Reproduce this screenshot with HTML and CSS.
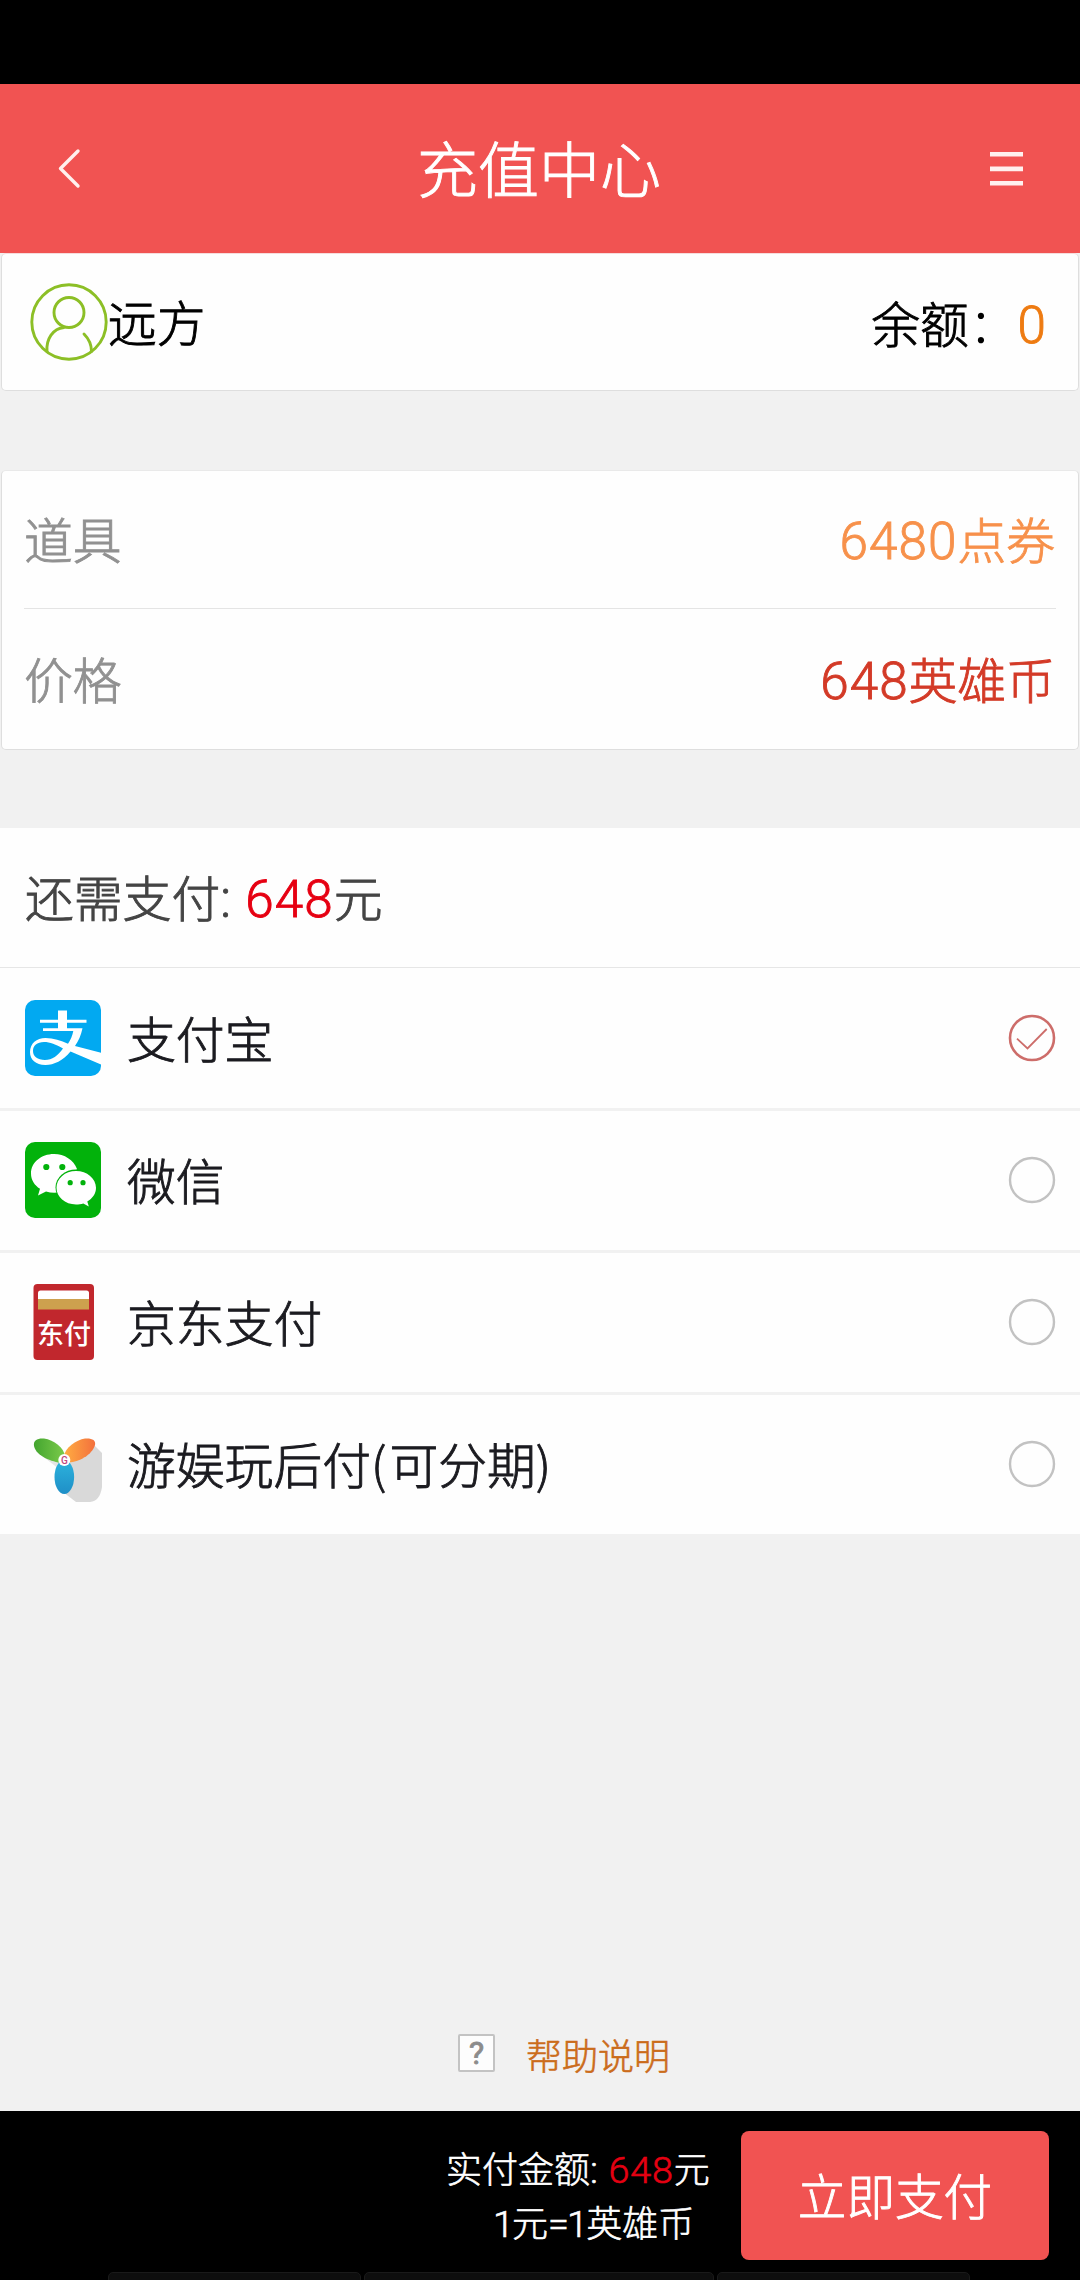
FILE: index.html
```html
<!DOCTYPE html>
<html lang="zh-CN">
<head>
<meta charset="utf-8">
<title>充值中心</title>
<link rel="stylesheet" href="styles.css">
</head>
<body>
<div class="status-bar"></div>
<header class="header">
  <svg class="back" viewBox="0 0 24 42" fill="none" stroke="#fff0ee" stroke-width="3.4" stroke-linecap="round" stroke-linejoin="round"><path d="M20 3 2.500 20.500 20 38"/></svg>
  <h1 class="title">充值中心</h1>
  <svg class="menu" viewBox="0 0 33 34" fill="#fff0ee"><path d="M0 0h33v4.6H0zM0 14.6h33v4.6H0zM0 29h33v4.6H0z"/></svg>
</header>

<section class="card account">
  <svg class="avatar" viewBox="0 0 78 78" fill="none" stroke="#8cbf26" stroke-width="2.9">
    <circle cx="39" cy="39" r="37.2"/>
    <circle cx="39" cy="29.5" r="15"/>
    <path d="M17 68.500C16 56 23 45.500 34 44.500M54 51C59 56 61.500 61.500 61.500 68.500" stroke-linecap="round"/>
  </svg>
  <span class="name">远方</span>
  <span class="balance">余额<i class="wide-colon">：</i><b class="num zero">0</b></span>
</section>

<section class="card order">
  <div class="order-row"><span>道具</span><span class="item"><b class="num">6480</b>点券</span></div>
  <div class="order-row"><span>价格</span><span class="price"><b class="num">648</b>英雄币</span></div>
</section>

<section class="methods">
  <div class="due"><span>还需支付<i class="num colon">:</i><b class="num red">648</b>元</span></div>

  <div class="method">
    <svg class="logo" viewBox="0 0 76 76">
      <rect width="76" height="76" rx="10" fill="#02a9f1"/>
      <path fill="#fff" d="M33 10.500h9v9.300h19.500v3H42v5.500h15.500C56 35.500 53.500 41 50 46L76 52.800V64.500L45.500 51.500C38 60.500 29 65 20.500 65 10.500 65 5 59.500 5 52 5 43.500 11.500 38 20.500 38c8 0 15.500 2.500 22.500 5.700C45.700 40 47.300 36 48.300 31H18v-2.700h15v-5.500H15v-3h18zM38 48.500C31 44.500 25 42 19 42 12 42 8 45.500 8 51s4.500 9 12 9c7 0 13-4.500 18-11.500z"/>
    </svg>
    <span class="label">支付宝</span>
    <svg class="radio" viewBox="0 0 48 48" fill="none" stroke="#cd6d6a"><circle cx="24" cy="24" r="22" stroke-width="2.600"/><path d="M9 24.700 19.500 34.500 38.700 15" stroke-width="1.800"/></svg>
  </div>

  <div class="method">
    <svg class="logo" viewBox="0 0 76 76">
      <rect width="76" height="76" rx="10" fill="#02b20b"/>
      <path fill="#fff" d="M29 12C16 12 6 20.500 6 31.500c0 6.500 3.500 11.800 9 15.300L13 53.500l8-4c5 1.500 10 1.500 15 .5L52 27C48.500 18 39.500 12 29 12z"/>
      <ellipse cx="51" cy="45.500" rx="20.500" ry="18" fill="#02b20b"/>
      <path fill="#fff" d="M51 29C40 29 31.500 36.500 31.500 45.800S40 62.500 51 62.500c2.700 0 5-.3 7.300-1l5.500 3-1.500-5C67.500 56.500 71 51.700 71 45.800 71 36.500 62 29 51 29z"/>
      <g fill="#02b20b"><circle cx="21.300" cy="25" r="3.100"/><circle cx="37.300" cy="25" r="3.100"/><circle cx="45.200" cy="40.700" r="2.600"/><circle cx="58" cy="40.700" r="2.600"/></g>
    </svg>
    <span class="label">微信</span>
    <svg class="radio" viewBox="0 0 48 48" fill="none" stroke="#c2c2c2"><circle cx="24" cy="24" r="22" stroke-width="2.4"/></svg>
  </div>

  <div class="method">
    <svg class="logo" viewBox="0 0 76 76">
      <rect x="8.500" width="60.500" height="76" rx="4" fill="#c1272d"/>
      <path d="M13 9q0-2.500 2.500-2.500h46q2.500 0 2.500 2.500v6H13z" fill="#fff"/>
      <path d="M13 15h51v10.500H13z" fill="#cda14e"/>
      <text class="jd" x="39" y="60" text-anchor="middle" fill="#fff">东付</text>
    </svg>
    <span class="label">京东支付</span>
    <svg class="radio" viewBox="0 0 48 48" fill="none" stroke="#c2c2c2"><circle cx="24" cy="24" r="22" stroke-width="2.4"/></svg>
  </div>

  <div class="method">
    <svg class="logo" viewBox="0 0 76 76">
      <defs>
        <linearGradient id="leaf" x1="0" y1="0" x2="1" y2="0"><stop offset="0" stop-color="#43a52f"/><stop offset="1" stop-color="#7ccb4b"/></linearGradient>
        <linearGradient id="flame" x1="0" y1="0" x2="1" y2="0"><stop offset="0" stop-color="#ffad42"/><stop offset="1" stop-color="#f3703d"/></linearGradient>
        <linearGradient id="drop" x1="0" y1="0" x2="0" y2="1"><stop offset="0" stop-color="#2cb3dd"/><stop offset="1" stop-color="#1f8fc7"/></linearGradient>
      </defs>
      <path fill="#e5e5e5" d="M11 25 34 43V34z"/>
      <path fill="#d9d9d9" d="M68 18 77 27V61Q75 75 65 76H51L38 66 40 32z"/>
      <path fill="url(#leaf)" d="M37 37C27 36 11 30 9 20 8 14 13 12 19 12.500 29 14 39 22 40 30z"/>
      <path fill="url(#flame)" d="M41 36C50 38 67 30 70 19 71 14 67 12 60 12.500 51 14 40 22 39 30z"/>
      <ellipse cx="39.300" cy="51" rx="9.800" ry="17" fill="url(#drop)"/>
      <circle cx="39.300" cy="34" r="6" fill="#fff"/>
      <text class="g" x="39.300" y="37.600" text-anchor="middle" fill="#c2477d">G</text>
    </svg>
    <span class="label">游娱玩后付<i class="paren">(</i>可分期<i class="paren">)</i></span>
    <svg class="radio" viewBox="0 0 48 48" fill="none" stroke="#c2c2c2"><circle cx="24" cy="24" r="22" stroke-width="2.4"/></svg>
  </div>
</section>

<div class="help">
  <span class="help-icon">?</span>
  <span class="help-text">帮助说明</span>
</div>

<footer class="footer">
  <div class="pay-bar">
    <div class="summary">
      <p>实付金额<i class="num colon">:</i><b class="num red">648</b>元</p>
      <p class="rate"><b class="num">1</b>元<b class="num">=1</b>英雄币</p>
    </div>
    <button class="pay">立即支付</button>
  </div>
  <div class="tabs"><span class="tab t1"></span><span class="tab t2"></span><span class="tab t3"></span></div>
</footer>
</body>
</html>
```
FILE: styles.css
```css
* { box-sizing: border-box; }
body {
  margin: 0;
  width: 1080px;
  height: 2280px;
  display: flex;
  flex-direction: column;
  overflow: hidden;
  background: #f1f1f1;
  font-family: "Noto Sans CJK SC", sans-serif;
  font-weight: 300;
  font-size: 48.8px;
  line-height: 1;
  white-space: nowrap;
  -webkit-text-stroke: .9px currentColor;
}
b, i { font-weight: inherit; font-style: normal; }
p { margin: 0; }
.num { font-family: Roboto, sans-serif; font-weight: 300; font-size: 1.05em; line-height: 0; letter-spacing: .02em; }
.colon { margin-right: .26em; }
.red { color: #e60012; }

.status-bar { height: 84px; background: #000; }
.header {
  height: 169px;
  padding: 0 57px 0 58px;
  display: flex;
  align-items: center;
  justify-content: space-between;
  background: #f15352;
}
.back { width: 24px; height: 42px; }
.menu { width: 33px; height: 34px; }
.title { margin: 0; padding: 0 0 5px 6px; color: #fff; font-size: 61px; font-weight: 300; }

.card {
  margin: 0 1px;
  background: #fefefe;
  border: 1px solid #dedede;
  border-radius: 5px;
}
.account {
  height: 138px;
  border-top-color: #f6dcdc;
  padding: 0 31px 0 28px;
  display: flex;
  align-items: center;
  color: #000;
}
.avatar { width: 78px; height: 78px; }
.name { padding-bottom: 1px; }
.balance { margin-left: auto; }
.wide-colon { -webkit-text-stroke: 0; }
.zero { color: #ee7b12; }

.order { margin-top: 79px; height: 280px; padding: 0 22px; border-top-color: #e9e9e9; }
.order-row {
  height: 139px;
  padding-right: 1px;
  display: flex;
  align-items: center;
  justify-content: space-between;
  color: #919191;
}
.order-row:first-child { border-bottom: 1px solid #e4e4e4; height: 138px; padding-bottom: 2px; }
.item { color: #f7914b; }
.price { color: #d33a27; }

.methods { margin-top: 78px; }
.due {
  height: 140px;
  padding: 0 0 2px 25px;
  display: flex;
  align-items: center;
  background: #fefefe;
  border-bottom: 1px solid #e6e6e6;
  color: #444;
}
.method {
  height: 142px;
  padding: 0 24px 1px 25px;
  display: flex;
  align-items: center;
  background: #fefefe;
  border-bottom: 3px solid #f1f1f1;
  color: #1b1b20;
}
.due + .method { height: 143px; }
.method:last-child { height: 139px; border-bottom: 0; }
.logo { width: 76px; height: 76px; overflow: visible; }
.label { margin-left: 26px; padding-bottom: 1px; }
.paren { font-family: "Noto Sans CJK SC", sans-serif; letter-spacing: 3px; }
.radio { width: 48px; height: 48px; margin-left: auto; }
.jd { font-size: 27px; font-weight: 500; -webkit-text-stroke: 0; }
.g { font: 500 10px Roboto, sans-serif; -webkit-text-stroke: 0; }

.help { margin-top: 499px; padding-left: 458px; display: flex; align-items: center; }
.help-icon {
  width: 37px;
  height: 38px;
  border: 2px solid #c3c3c3;
  background: #fdfdfd;
  border-radius: 2px;
  color: #8c8c8c;
  font: 400 32px/34px Roboto, sans-serif;
  text-align: center;
}
.help-text { margin-left: 31px; padding-top: 3px; font-size: 36px; color: #cb6c1b; -webkit-text-stroke-width: .6px; }

.footer { margin-top: auto; height: 169px; background: #000; }
.pay-bar { height: 161px; padding: 8px 31px 0 0; display: flex; align-items: center; justify-content: flex-end; }
.summary { width: 264px; margin-right: 31px; padding-bottom: 3px; font-size: 36px; color: #fff; line-height: 54px; -webkit-text-stroke-width: .6px; }
.rate { padding-left: 47px; }
.rate .num { letter-spacing: -.05em; }
.pay {
  width: 308px;
  height: 129px;
  padding: 0 0 3px;
  border: 0;
  border-radius: 8px;
  background: #f15352;
  color: #fff;
  font: 300 48.6px "Noto Sans CJK SC", sans-serif;
}
.tabs { height: 8px; padding-left: 108px; display: flex; gap: 3px; overflow: hidden; }
.tab { height: 14px; background: #0e0e0e; border: 1px solid #1a1a1a; border-radius: 5px; }
.t1 { width: 253px; }
.t2 { width: 350px; }
.t3 { width: 253px; }
```
